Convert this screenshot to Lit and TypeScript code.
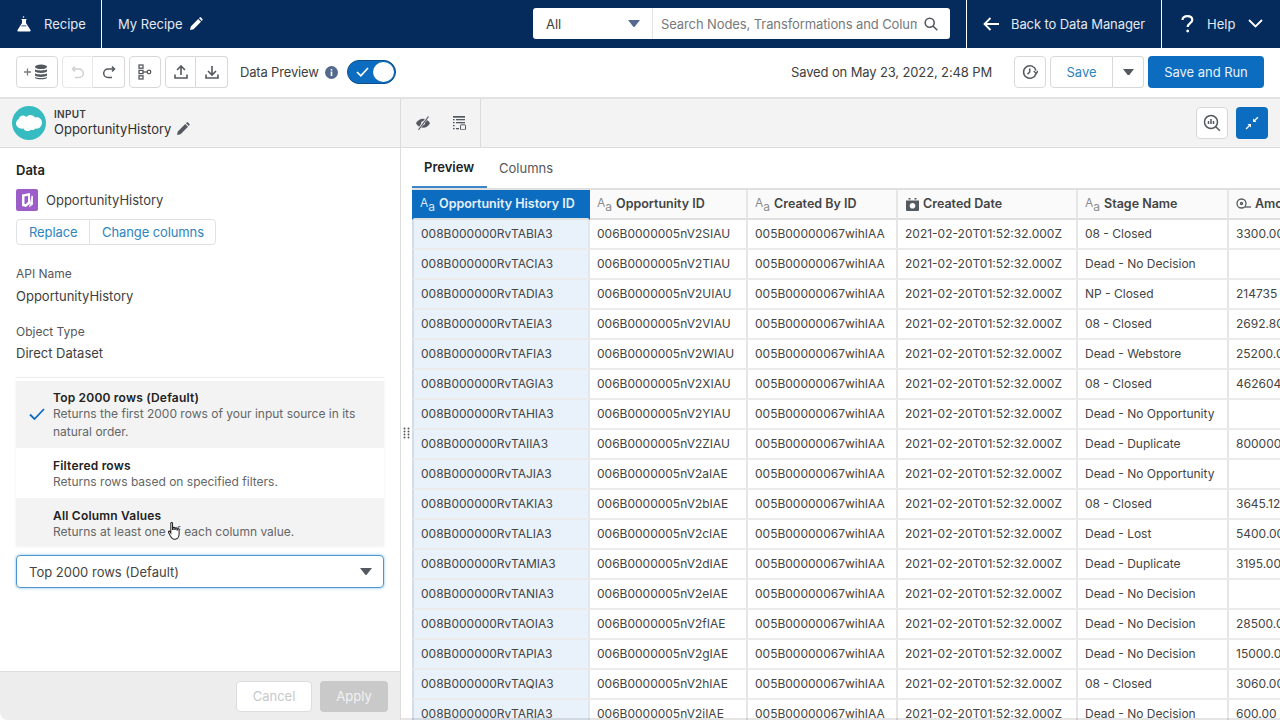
import { LitElement, html, css } from "lit";
import { customElement } from "lit/decorators.js";

const AA = html`<span class="aa">A<sub>a</sub></span>`;
const ROWS: string[][] = [
  ["ABIA3","SIAU","08 - Closed","3300.00"],["ACIA3","TIAU","Dead - No Decision",""],["ADIA3","UIAU","NP - Closed","214735"],
  ["AEIA3","VIAU","08 - Closed","2692.80"],["AFIA3","WIAU","Dead - Webstore","25200.00"],["AGIA3","XIAU","08 - Closed","462604"],
  ["AHIA3","YIAU","Dead - No Opportunity",""],["AIIA3","ZIAU","Dead - Duplicate","800000"],["AJIA3","aIAE","Dead - No Opportunity",""],
  ["AKIA3","bIAE","08 - Closed","3645.12"],["ALIA3","cIAE","Dead - Lost","5400.00"],["AMIA3","dIAE","Dead - Duplicate","3195.00"],
  ["ANIA3","eIAE","Dead - No Decision",""],["AOIA3","fIAE","Dead - No Decision","28500.00"],["APIA3","gIAE","Dead - No Decision","15000.00"],
  ["AQIA3","hIAE","08 - Closed","3060.00"],["ARIA3","iIAE","Dead - No Decision","600.00"],
];
const pencil = (c: string, s = 14) => html`<svg width=${s} height=${s} viewBox="0 0 14 14"><path fill=${c} d="M1 13l.8-3.600L9.200 2l2.800 2.800-7.400 7.400zM10 1.200l.7-.6c.4-.4 1-.4 1.400 0l1.300 1.300c.4.4.4 1 0 1.400l-.6.700z"/></svg>`;
const caret = (c: string, w = 12) => html`<svg width=${w} height=${w * 0.6} viewBox="0 0 14 8.400"><path fill=${c} d="M0 0h14L7.800 8c-.4.400-1.200.400-1.600 0z"/></svg>`;

@customElement("app-root")
export class AppRoot extends LitElement {
  static styles = css`
    :host { display: block; width: 1280px; height: 720px; overflow: hidden; font: 13px/18px Inter, "Liberation Sans", sans-serif; color: #3e3e3c; background: #fff; }
    svg { display: block; flex: none; }
    .nav { height: 48px; background: #042b5c; color: #e3e9f2; display: flex; align-items: center; }
    .nav-cell { height: 48px; display: flex; align-items: center; box-sizing: border-box; padding-bottom: 1px; }
    .brand { width: 102px; padding-left: 17px; gap: 13px; border-right: 1px solid #fff; }
    .title { padding-left: 16px; gap: 6px; width: 431px; }
    .search { width: 417px; height: 31px; margin-top: -1px; background: #fff; border-radius: 3px; display: flex; color: #3e3e3c; }
    .search-sel { width: 120px; box-sizing: border-box; padding: 0 12px 0 13px; display: flex; align-items: center; justify-content: space-between; border-right: 1px solid #e4e4e4; }
    .search-in { flex: 1; display: flex; align-items: center; padding: 0 12px 0 8px; gap: 7px; color: #77797c; min-width: 0; }
    .search-in span { flex: 1; overflow: hidden; white-space: nowrap; letter-spacing: -.1px; }
    .back { margin-left: 16px; width: 196px; padding-left: 16px; gap: 11px; border-left: 1px solid #fff; border-right: 1px solid #fff; letter-spacing: -.1px; }
    .help { padding-left: 19px; gap: 13px; }
    .tools { height: 48px; display: flex; align-items: center; padding: 0 16px; box-sizing: border-box; }
    .btn { height: 32px; box-sizing: border-box; border: 1px solid #d8d8d8; background: #fff; display: flex; align-items: center; justify-content: center; border-radius: 4px; color: #2e84bd; }
    .grp { display: flex; }
    .grp .btn { border-radius: 0; }
    .grp .btn:first-child { border-radius: 4px 0 0 4px; }
    .grp .btn:last-child { border-radius: 0 4px 4px 0; border-left: 0; }
    .dp { margin-left: 12px; letter-spacing: -.17px; }
    .info { margin-left: 6px; }
    .toggle { margin-left: 9px; width: 49px; height: 24px; border-radius: 12px; background: #0b6cc0; box-sizing: border-box; padding: 1px; display: flex; align-items: center; justify-content: space-between; border: 1px solid #0a4f8c; }
    .knob { width: 21px; height: 20px; border-radius: 50%; background: #fff; }
    .tick { margin-left: 7px; }
    .saved { margin-left: auto; margin-right: 22px; color: #3e3e3c; letter-spacing: -.13px; }
    .run { background: #0b6cc0; border: 0; color: #e9f1fa; width: 116px; margin-left: 4px; letter-spacing: -.05px; }
    .sub { margin-top: 1px; height: 51px; box-sizing: border-box; background: #f3f3f4; border-top: 2px solid #e2e2e2; border-bottom: 1px solid #dcdcdc; display: flex; }
    .sub-l { width: 401px; box-sizing: border-box; border-right: 1px solid #dcdcdc; display: flex; align-items: center; padding-left: 12px; gap: 8px; }
    .logo { width: 34px; height: 34px; border-radius: 50%; background: #36bcc0; display: flex; align-items: center; justify-content: center; }
    .kicker { font-size: 10px; line-height: 12px; font-weight: 600; letter-spacing: .3px; }
    .nameline { display: flex; align-items: center; gap: 5px; line-height: 18px; color: #2f2f2f; }
    .sub-m { width: 80px; box-sizing: border-box; display: flex; align-items: center; border-right: 1px solid #dcdcdc; padding-left: 15px; gap: 22px; }
    .sub-r { flex: 1; display: flex; align-items: center; justify-content: flex-end; gap: 8px; padding-right: 12px; }
    .sq { width: 32px; }
    .sq.on { background: #0b6cc0; border: 0; }
    .main { display: flex; height: 572px; }
    .left { width: 401px; box-sizing: border-box; border-right: 1px solid #dcdcdc; display: flex; flex-direction: column; }
    .form { flex: 1; padding: 13px 16px 0; position: relative; }
    .h { font-weight: 600; color: #222; }
    .src { display: flex; align-items: center; gap: 8px; margin-top: 10px; }
    .src-i { width: 22px; height: 22px; border-radius: 2px; background: #9c5dc9; display: flex; align-items: center; justify-content: center; }
    .bgrp { display: inline-flex; margin-top: 8px; border: 1px solid #dfe1e3; border-radius: 4px; height: 26px; box-sizing: border-box; color: #2e84bd; width: 200px; letter-spacing: -.1px; }
    .bgrp span { display: flex; align-items: center; padding-left: 12px; }
    .bgrp span:first-child { width: 73px; box-sizing: border-box; border-right: 1px solid #dfe1e3; }
    .lbl { margin-top: 20px; font-size: 12px; line-height: 18px; color: #55575a; }
    .val { margin-top: 4px; color: #3e3e3c; }
    .lbl.b { margin-top: 18px; }
    .val.b { margin-top: 3px; }
    .dd { margin-top: 15px; border-top: 1px solid #eee; padding-top: 3px; background: #fff; box-shadow: 0 1px 3px rgba(0,0,0,.06); }
    .opt { padding: 10px 16px 0 37px; box-sizing: border-box; position: relative; font-size: 12px; line-height: 18px; color: #646668; }
    .opt b { display: block; color: #222; font-weight: 600; line-height: 15px; letter-spacing: .2px; }
    .o1 { height: 67px; background: #f3f3f3; padding-top: 9px; }
    .o2 { height: 50px; }
    .o3 { height: 48px; background: #f3f3f3; }
    .o1 svg { position: absolute; left: 13px; top: 27px; }
    .hand { position: absolute; left: 152px; top: 24px; }
    .sel { margin-top: 9px; height: 33px; box-sizing: border-box; border: 1px solid #4c97cf; border-radius: 4px; box-shadow: 0 0 3px #7fbde8; display: flex; align-items: center; justify-content: space-between; padding: 0 11px 0 12px; color: #444; }
    .foot { height: 49px; background: #ededed; border-top: 1px solid #dcdcdc; display: flex; align-items: center; justify-content: flex-end; gap: 8px; padding-right: 12px; box-sizing: border-box; border-bottom-left-radius: 8px; }
    .fb { height: 31px; border-radius: 4px; display: flex; align-items: center; justify-content: center; box-sizing: border-box; }
    .cancel { width: 76px; background: #fff; border: 1px solid #dcdcdc; color: #c9c9c9; }
    .apply { width: 68px; background: #c9c9c9; color: #f2f2f2; }
    .right { flex: 1; min-width: 0; position: relative; padding-left: 11px; overflow: hidden; }
    .right::after { content: ""; position: absolute; left: 0; right: 0; bottom: 0; height: 2px; background: rgba(0,0,0,.1); }
    .handle { position: absolute; left: 2px; top: 279px; }
    .tabs { height: 40px; display: flex; color: #55575a; }
    .tab { display: flex; align-items: center; padding: 0 12px; }
    .tab.on { width: 75px; box-sizing: border-box; font-weight: 600; color: #222; border-bottom: 2px solid #3f86c4; }
    .table { display: grid; grid-template-columns: 178px 158px 150px 180px 151px 120px; width: 937px; border-top: 2px solid #e0e0e0; }
    .c { height: 30px; box-sizing: border-box; display: flex; align-items: center; padding-left: 7px; border-right: 2px solid #e6e6e6; border-bottom: 2px solid #ebebeb; white-space: nowrap; overflow: hidden; font-size: 12px; color: #444; }
    .c.hd { background: #fafafa; font-size: 12.500px; font-weight: 600; color: #444; gap: 4px; border-bottom-color: #e0e0e0; }
    .c.hd.first { background: #0b6cc0; color: #e6f0fa; border-right-color: #0b6cc0; border-left-color: #0b6cc0; padding-left: 6px; }
    .c.f { background: #e9f1fb; border-left: 2px solid #d5dce6; border-right-color: #dfe7f2; }
    .aa { font-size: 12px; line-height: 12px; font-weight: 400; color: #8a8d90; display: inline-flex; align-items: flex-start; height: 15px; }
    .aa sub { font-size: 12px; line-height: 12px; margin-top: 4px; vertical-align: baseline; }
    .first .aa { color: #d8e8f8; }
    .cal { margin-left: 1px; }
  `;

  render() {
    return html`
      <div class="nav">
        <div class="nav-cell brand">
          <svg width="14" height="16" viewBox="0 0 14 16"><path fill="#fff" d="M4.500 3h5v1H9v3l4.500 7c.4.800-.1 1.500-1 1.500H1.500c-.9 0-1.400-.7-1-1.500L5 7V4h-.5z"/><path fill="#042b5c" d="M4.600 9.500h4.800v.8H4.100z"/><circle cx="6.500" cy="1" r=".8" fill="#fff"/></svg>
          <span>Recipe</span>
        </div>
        <div class="nav-cell title"><span>My Recipe</span>${pencil("#fff")}</div>
        <div class="search">
          <div class="search-sel"><span>All</span>${caret("#54698d")}</div>
          <div class="search-in"><span>Search Nodes, Transformations and Columns</span>
            <svg width="14" height="14" viewBox="0 0 14 14" fill="none" stroke="#54595f" stroke-width="1.600"><circle cx="5.700" cy="5.700" r="4.500"/><path d="M9 9l4.300 4.300"/></svg></div>
        </div>
        <div class="nav-cell back">
          <svg width="17" height="14" viewBox="0 0 17 14" fill="none" stroke="#fff" stroke-width="1.800"><path d="M1.500 7H16M7.500 1L1.500 7l6 6"/></svg>
          <span>Back to Data Manager</span>
        </div>
        <div class="nav-cell help">
          <svg width="13" height="18" viewBox="0 0 13 18" fill="none" stroke="#fff" stroke-width="2.200"><path d="M1.500 5c0-2.300 2-3.800 4.800-3.800 3 0 5 1.500 5 3.800 0 3-4.600 3.300-4.600 7"/><circle cx="6.700" cy="16" r="1" fill="#fff" stroke-width="1"/></svg>
          <span>Help</span>
          <svg style="margin-left:0" width="15" height="9" viewBox="0 0 15 9" fill="none" stroke="#fff" stroke-width="1.800"><path d="M1 1l6.500 6.500L14 1"/></svg>
        </div>
      </div>

      <div class="tools">
        <div class="btn" style="width:42px">
          <svg width="26" height="16" viewBox="0 0 26 16"><path stroke="#7a7d80" stroke-width="1.300" d="M0 8h7M3.500 4.500v7"/><g fill="#54595f"><ellipse cx="17" cy="2.800" rx="6" ry="2.300"/><path d="M11 5.200c1 1.600 11 1.600 12 0v2.400c-1 1.800-11 1.800-12 0zM11 9.200c1 1.600 11 1.600 12 0v2.400c-1 1.800-11 1.800-12 0zM11 13c1 1.300 11 1.300 12 0v1c-1 1.700-11 1.700-12 0z"/></g></svg>
        </div>
        <div class="grp" style="margin-left:4px">
          <div class="btn" style="width:31px;border-color:#e8e8e8"><svg width="14" height="14" viewBox="0 0 14 14" fill="none" stroke="#d0d0d0" stroke-width="1.500"><path d="M4 1.500L1.500 4 4 6.500M2 4h6a4.300 4.300 0 010 8.600H4"/></svg></div>
          <div class="btn" style="width:32px"><svg width="14" height="14" viewBox="0 0 14 14" fill="none" stroke="#54595f" stroke-width="1.500"><path d="M10 1.500L12.500 4 10 6.500M12 4H6a4.300 4.300 0 000 8.600h4"/></svg></div>
        </div>
        <div class="btn" style="width:32px;margin-left:4px">
          <svg width="14" height="16" viewBox="0 0 14 16" fill="none" stroke="#54595f" stroke-width="1.300"><rect x="1" y="1" width="4" height="3.200"/><rect x="1" y="6.400" width="4" height="3.200"/><rect x="1" y="11.800" width="4" height="3.200"/><path d="M5 8h4"/><circle cx="11" cy="8" r="1.800"/></svg>
        </div>
        <div class="grp" style="margin-left:4px">
          <div class="btn" style="width:31px"><svg width="14" height="14" viewBox="0 0 14 14" fill="none" stroke="#54595f" stroke-width="1.600"><path d="M7 10V1.500M3 5l4-4 4 4M1 9.500v3.500h12V9.500"/></svg></div>
          <div class="btn" style="width:32px"><svg width="14" height="14" viewBox="0 0 14 14" fill="none" stroke="#54595f" stroke-width="1.600"><path d="M7 1v8.500M3 6l4 4 4-4M1 9.500v3.500h12V9.500"/></svg></div>
        </div>
        <span class="dp">Data Preview</span>
        <svg class="info" width="13" height="13" viewBox="0 0 13 13"><circle cx="6.500" cy="6.500" r="6.500" fill="#54698d"/><path fill="#fff" d="M5.700 5.500h1.600v4.500H5.700zM5.700 3h1.600v1.500H5.700z"/></svg>
        <div class="toggle"><svg class="tick" width="13" height="10" viewBox="0 0 13 10" fill="none" stroke="#fff" stroke-width="1.700"><path d="M1 5l3.800 3.800L12 1"/></svg><div class="knob"></div></div>
        <span class="saved">Saved on May 23, 2022, 2:48 PM</span>
        <div class="btn sq"><svg width="16" height="16" viewBox="0 0 16 16" fill="none" stroke="#54595f" stroke-width="1.500"><path d="M14 9.500A6.300 6.300 0 1114 6.500"/><path d="M11.800 7l2.400 2.400L16 7" stroke-width="1.400"/><path d="M7.700 4.500V8L5.500 10.200"/></svg></div>
        <div class="grp" style="margin-left:4px">
          <div class="btn" style="width:63px">Save</div>
          <div class="btn" style="width:31px">${caret("#54595f", 11)}</div>
        </div>
        <div class="btn run">Save and Run</div>
      </div>

      <div class="sub">
        <div class="sub-l">
          <div class="logo"><svg width="26" height="18" viewBox="0 0 26 18"><path fill="#fff" d="M10.500 3C11.500 1.600 13 1 14.500 1c2 0 3.700 1 4.500 2.600 4-1.500 7 1.600 7 5.200 0 3.800-3.300 6.500-6.800 5.700-1 1.700-3 2-4.500 1.200C13.800 17.500 9 18 7.500 14.500 3.500 15.300 0 12.500 0 9.500c0-2 1-3.500 2.600-4.300C3.200 1.500 8 0 10.500 3z"/></svg></div>
          <div>
            <div class="kicker">INPUT</div>
            <div class="nameline"><span>OpportunityHistory</span>${pencil("#54595f")}</div>
          </div>
        </div>
        <div class="sub-m">
          <svg width="14" height="14" viewBox="0 0 14 14" fill="#54595f"><path d="M0 7.200C1.700 4.200 4.100 2.700 7 2.700s5.300 1.500 7 4.500c-1.700 3-4.100 4.500-7 4.500S1.700 10.200 0 7.200z"/><circle cx="7" cy="7.200" r="1.900" fill="#f3f3f4"/><path stroke="#f3f3f4" stroke-width="2.400" d="M12 .8L2.500 13.500"/><path stroke="#54595f" stroke-width="1.200" d="M12.500 .5L2.500 13.800"/></svg>
          <svg width="14" height="14" viewBox="0 0 14 14" fill="#54595f"><rect x="1" y="0" width="12" height="1.700"/><rect x="1" y="3" width="1.600" height="1.300"/><rect x="4" y="3" width="9" height="1.300"/><rect x="1" y="6" width="1.600" height="1.300"/><rect x="4" y="6" width="9" height="1.300"/><rect x="1" y="9" width="1.600" height="1.300"/><rect x="1" y="12" width="1.600" height="1.300"/><rect x="4" y="12" width="3" height="1.300"/><rect x="8.500" y="8.800" width="5" height="5" rx=".6" fill="none" stroke="#54595f" stroke-width="1"/></svg>
        </div>
        <div class="sub-r">
          <div class="btn sq"><svg width="18" height="18" viewBox="0 0 18 18" fill="none" stroke="#54595f" stroke-width="1.500"><circle cx="8" cy="8" r="6.500"/><path d="M12.800 12.800l4 4M5.500 7v3M8 5v5M10.500 7v3"/></svg></div>
          <div class="btn sq on"><svg width="14" height="14" viewBox="0 0 14 14" fill="#fff"><path d="M8 6V2.500L9.300 3.800 12.500 .8l.9.900-3.100 3.100L11.500 6zM6 8v3.500L4.700 10.200 1.500 13.400l-.9-.9 3.200-3.200L2.500 8z"/></svg></div>
        </div>
      </div>

      <div class="main">
        <div class="left">
          <div class="form">
            <div class="h">Data</div>
            <div class="src"><div class="src-i"><svg width="14" height="16" viewBox="0 0 14 16"><path fill="#fff" d="M2 2.500L10 1v10.500L6 15l-4-1z" /><path fill="#9c5dc9" d="M4.500 4.500L8 3.800v6L6 12H4.500z"/><path fill="#fff" d="M11.500 3.500L13 4v8.500l-4 3z" opacity=".9"/></svg></div><span>OpportunityHistory</span></div>
            <div class="bgrp"><span>Replace</span><span>Change columns</span></div>
            <div class="lbl">API Name</div>
            <div class="val">OpportunityHistory</div>
            <div class="lbl b">Object Type</div>
            <div class="val b">Direct Dataset</div>
            <div class="dd">
              <div class="opt o1">
                <svg width="16" height="12" viewBox="0 0 16 12" fill="none" stroke="#0b6cc0" stroke-width="1.800"><path d="M1 6.500L5.500 11 15 1"/></svg>
                <b>Top 2000 rows (Default)</b>Returns the first 2000 rows of your input source in its natural order.
              </div>
              <div class="opt o2"><b>Filtered rows</b>Returns rows based on specified filters.</div>
              <div class="opt o3"><b>All Column Values</b>Returns at least one of each column value.
                <svg class="hand" width="13" height="18" viewBox="0.500 0.500 11.500 15.500"><path fill="#fff" stroke="#222" stroke-width=".9" d="M3 1.500c0-1 1.500-1 1.500 0V7h.5V5.500c0-.8 1.500-.8 1.500 0V7h.4V6c0-.8 1.500-.8 1.500 0v1.300h.4V6.800c0-.8 1.500-.8 1.500 0V11c0 2.500-1.500 4.500-3.500 4.500H6c-2 0-2.500-1.500-3.500-3L1 9.500c-.5-1 .8-1.500 1.300-.7L3 10z"/></svg>
              </div>
            </div>
            <div class="sel"><span>Top 2000 rows (Default)</span>${caret("#54595f")}</div>
          </div>
          <div class="foot"><div class="fb cancel">Cancel</div><div class="fb apply">Apply</div></div>
        </div>
        <div class="right">
          <svg class="handle" width="8" height="12" viewBox="0 0 8 12" fill="#54595f"><circle cx="1.500" cy="1.500" r="1"/><circle cx="5.500" cy="1.500" r="1"/><circle cx="1.500" cy="4.500" r="1"/><circle cx="5.500" cy="4.500" r="1"/><circle cx="1.500" cy="7.500" r="1"/><circle cx="5.500" cy="7.500" r="1"/><circle cx="1.500" cy="10.500" r="1"/><circle cx="5.500" cy="10.500" r="1"/></svg>
          <div class="tabs"><div class="tab on">Preview</div><div class="tab">Columns</div></div>
          <div class="table">
            <div class="c hd f first">${AA}<span>Opportunity History ID</span></div>
            <div class="c hd">${AA}<span>Opportunity ID</span></div>
            <div class="c hd">${AA}<span>Created By ID</span></div>
            <div class="c hd"><svg class="cal" width="13" height="14" viewBox="0 0 13 14" fill="#54595f"><path d="M0 3.500h13V13a1 1 0 01-1 1H1a1 1 0 01-1-1zM2.500 1h2v1.500h-2zM8.500 1h2v1.500h-2z"/><circle cx="6.500" cy="8.800" r="2.800" fill="#fafafa"/></svg><span>Created Date</span></div>
            <div class="c hd">${AA}<span>Stage Name</span></div>
            <div class="c hd"><svg width="15" height="12" viewBox="0 0 15 12" fill="none" stroke="#54595f" stroke-width="1.300"><circle cx="5.500" cy="5.500" r="4.500"/><circle cx="5.500" cy="5.500" r="1"/><path d="M9 9h6"/></svg><span>Amount</span></div>
            ${ROWS.map((r) => html`
              <div class="c f">008B000000RvT${r[0]}</div>
              <div class="c">006B0000005nV2${r[1]}</div>
              <div class="c">005B00000067wihIAA</div>
              <div class="c">2021-02-20T01:52:32.000Z</div>
              <div class="c">${r[2]}</div>
              <div class="c">${r[3]}</div>`)}
          </div>
        </div>
      </div>
    `;
  }
}
